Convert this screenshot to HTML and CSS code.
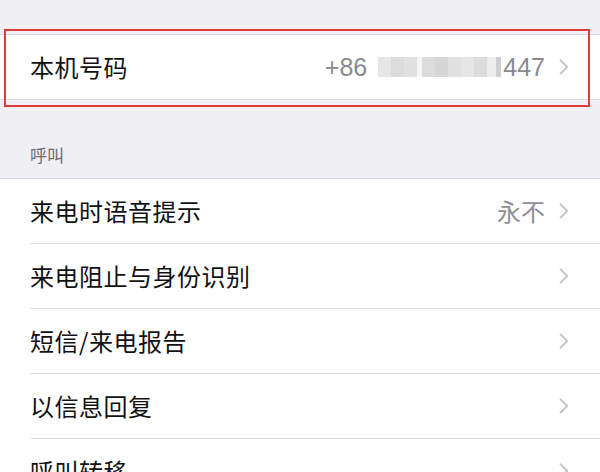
FILE: index.html
```html
<!DOCTYPE html>
<html lang="zh-CN">
<head>
<meta charset="utf-8">
<title>电话</title>
<link rel="stylesheet" href="styles.css">
</head>
<body>
<div class="screen">
  <div class="top-space"></div>
  <div class="group">
    <div class="row">
      <span class="label">本机号码</span>
      <span class="value">
        <span class="num">+86</span>
        <span class="mosaic">
          <i class="m1"></i><i class="m2"></i><i class="m3"></i><i class="gap"></i><i class="m2"></i><i class="m4"></i><i class="m3"></i><i class="m1"></i><i class="m2"></i><i class="m6"></i><i class="m5"></i>
        </span>
        <span class="num tail">447</span>
      </span>
      <svg class="chev" viewBox="0 0 10 16" width="10" height="16"><path d="M1.6 1.4 L8.2 8 L1.6 14.6"/></svg>
    </div>
  </div>
  <div class="section-header">呼叫</div>
  <div class="group">
    <div class="row">
      <span class="label">来电时语音提示</span>
      <span class="value">永不</span>
      <svg class="chev" viewBox="0 0 10 16" width="10" height="16"><path d="M1.6 1.4 L8.2 8 L1.6 14.6"/></svg>
    </div>
    <div class="row">
      <span class="label">来电阻止与身份识别</span>
      <svg class="chev" viewBox="0 0 10 16" width="10" height="16"><path d="M1.6 1.4 L8.2 8 L1.6 14.6"/></svg>
    </div>
    <div class="row">
      <span class="label">短信/来电报告</span>
      <svg class="chev" viewBox="0 0 10 16" width="10" height="16"><path d="M1.6 1.4 L8.2 8 L1.6 14.6"/></svg>
    </div>
    <div class="row">
      <span class="label">以信息回复</span>
      <svg class="chev" viewBox="0 0 10 16" width="10" height="16"><path d="M1.6 1.4 L8.2 8 L1.6 14.6"/></svg>
    </div>
    <div class="row">
      <span class="label">呼叫转移</span>
      <svg class="chev" viewBox="0 0 10 16" width="10" height="16"><path d="M1.6 1.4 L8.2 8 L1.6 14.6"/></svg>
    </div>
  </div>
  <div class="highlight"></div>
</div>
</body>
</html>
```
FILE: styles.css
```css
html, body {
  margin: 0;
  padding: 0;
}
body {
  background: #efeff4;
  font-family: "Noto Sans CJK SC", "Noto Sans", sans-serif;
  color: #111;
}
.screen {
  position: relative;
  width: 600px;
  height: 472px;
  overflow: hidden;
  background: #efeff4;
}
.top-space {
  height: 34px;
}
.group {
  background: #fff;
  border-top: 1px solid #dcdce0;
  border-bottom: 1px solid #dcdce0;
}
.row {
  display: flex;
  align-items: center;
  height: 65px;
  margin-left: 30px;
  padding-right: 31px;
  border-bottom: 1px solid #dedee2;
  box-sizing: border-box;
}
.group .row:last-child {
  border-bottom: none;
  height: 64px;
}
.label {
  flex: 1;
  font-size: 24px;
  letter-spacing: 0.5px;
  line-height: 1;
  color: #111;
}
.value {
  display: flex;
  align-items: center;
  font-size: 24px;
  line-height: 1;
  color: #8e8e93;
  margin-right: 14px;
}
.num {
  font-family: "Liberation Sans", "Noto Sans", sans-serif;
  font-size: 25px;
  color: #8a8a8e;
}
.mosaic {
  display: flex;
  height: 20px;
  margin-left: 11px;
  margin-right: 2px;
}
.mosaic i {
  display: block;
  width: 13px;
  height: 20px;
}
.mosaic .m1 { background: #e6e6e6; }
.mosaic .m2 { background: #dcdcdc; }
.mosaic .m3 { background: #e1e1e1; }
.mosaic .m4 { background: #d6d6d6; }
.mosaic .m6 { background: #ededed; width: 9px; }
.mosaic .m5 { background: #cfcfcf; width: 5px; }
.mosaic .gap { background: #f6f6f6; width: 5px; }
.chev {
  flex: none;
  fill: none;
  stroke: #c4c4c9;
  stroke-width: 2;
  stroke-linecap: round;
  stroke-linejoin: round;
}
.section-header {
  height: 78px;
  box-sizing: border-box;
  padding: 46px 0 0 30px;
  font-size: 17px;
  line-height: 1;
  color: #6d6d72;
}
.highlight {
  position: absolute;
  left: 4px;
  top: 29px;
  width: 586px;
  height: 78px;
  box-sizing: border-box;
  border: 2px solid #e33b3b;
}
```
